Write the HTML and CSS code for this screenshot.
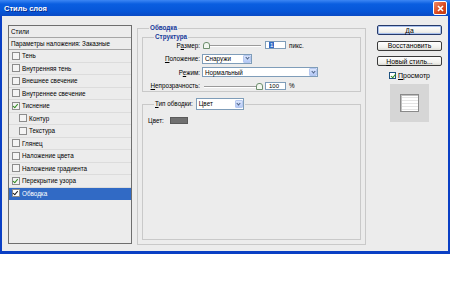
FILE: index.html
```html
<!DOCTYPE html>
<html>
<head>
    <meta charset="utf-8">
    <link rel="stylesheet" href="styles.css">
</head>
<body>
<div class="window">
    <div class="titlebar">
        <span class="title">Стиль слоя</span>
        <span class="close">
            <svg width="7" height="7" viewBox="0 0 7 7"><path d="M1 1 L6 6 M6 1 L1 6" stroke="#fff" stroke-width="1.6"/></svg>
        </span>
    </div>

    <div class="body">
        <!-- список стилей слева -->
        <div class="styles-list">
            <div class="list-head">Стили</div>
            <div class="list-head">Параметры наложения: Заказные</div>
            <div class="item"><span class="cb"></span>Тень</div>
            <div class="item"><span class="cb"></span>Внутренняя тень</div>
            <div class="item"><span class="cb"></span>Внешнее свечение</div>
            <div class="item"><span class="cb"></span>Внутреннее свечение</div>
            <div class="item"><span class="cb checked"></span>Тиснение</div>
            <div class="item sub"><span class="cb"></span>Контур</div>
            <div class="item sub"><span class="cb"></span>Текстура</div>
            <div class="item"><span class="cb"></span>Глянец</div>
            <div class="item"><span class="cb"></span>Наложение цвета</div>
            <div class="item"><span class="cb"></span>Наложение градиента</div>
            <div class="item"><span class="cb checked"></span>Перекрытие узора</div>
            <div class="item selected"><span class="cb checked"></span>Обводка</div>
        </div>

        <!-- параметры обводки -->
        <fieldset class="group main">
            <legend>Обводка</legend>

            <fieldset class="group struct">
                <legend>Структура</legend>
                <div class="row first">
                    <span class="lbl">Р<u>а</u>змер:</span>
                    <span class="slider"><span class="thumb" style="left: 0px"></span></span>
                    <span class="field"><span class="sel-text">1</span></span>
                    <span class="unit">пикс.</span>
                </div>
                <div class="row">
                    <span class="lbl"><u>П</u>оложение:</span>
                    <span class="combo w-pos">Снаружи<span class="arrow"></span></span>
                </div>
                <div class="row">
                    <span class="lbl">Р<u>е</u>жим:</span>
                    <span class="combo w-mode">Нормальный<span class="arrow"></span></span>
                </div>
                <div class="row">
                    <span class="lbl"><u>Н</u>епрозрачность:</span>
                    <span class="slider"><span class="thumb" style="left: 53px"></span></span>
                    <span class="field">100</span>
                    <span class="unit">%</span>
                </div>
            </fieldset>

            <fieldset class="group type">
                <legend>
                    <span class="type-lbl"><u>Т</u>ип обводки:</span>
                    <span class="combo w-type">Цвет<span class="arrow"></span></span>
                </legend>
                <div class="color-row">
                    <span>Цвет:</span>
                    <span class="swatch"></span>
                </div>
            </fieldset>
        </fieldset>

        <!-- кнопки справа -->
        <div class="actions">
            <div class="btn default">Да</div>
            <div class="btn">Восстановить</div>
            <div class="btn"><u>Н</u>овый стиль...</div>
            <div class="preview-check"><span class="cb checked big"></span><span><u>П</u>росмотр</span></div>
            <div class="preview">
                <div class="preview-square"></div>
            </div>
        </div>
    </div>
</div>
</body>
</html>
```

FILE: styles.css
```css
body {
    margin: 0;
    padding: 0;
    background: #ffffff;
    font-family: "Liberation Sans", Arial, sans-serif;
}

u {
    text-decoration: underline;
}

.window {
    width: 450px;
    height: 254px;
    box-sizing: border-box;
    border-left: 2px solid #0a3fc4;
    border-right: 2px solid #0a3fc4;
    border-bottom: 3px solid #0a3fc4;
    background: #ececec;
}

/* синяя полоса заголовка */
.titlebar {
    height: 16px;
    margin: 0 -2px;
    padding: 0 3px 0 4px;
    display: flex;
    align-items: center;
    justify-content: space-between;
    background: linear-gradient(#3c86f4, #0a5ee0 25%, #0656d8 70%, #0a4ac4);
}

.title {
    color: #ffffff;
    font-size: 7.5px;
    font-weight: bold;
    text-shadow: 1px 1px 0 #0a2a8a;
}

.close {
    width: 12px;
    height: 12px;
    border: 1px solid #ffffff;
    border-radius: 2px;
    background: linear-gradient(135deg, #f08a66, #d8451c 60%, #c23a12);
    display: flex;
    align-items: center;
    justify-content: center;
}

.body {
    height: 235px;
    box-sizing: border-box;
    padding: 9px 6px 0 6px;
    display: flex;
    align-items: flex-start;
    font-size: 6.3px;
    color: #000000;
}

/* левый список */
.styles-list {
    width: 124px;
    height: 219px;
    box-sizing: border-box;
    border: 1px solid #6e6e6e;
    background: #ececec;
    flex-shrink: 0;
}

.list-head {
    height: 12px;
    box-sizing: border-box;
    border-bottom: 1px solid #a6a6a6;
    padding-left: 2px;
    display: flex;
    align-items: center;
}

.item {
    height: 12.5px;
    box-sizing: border-box;
    border-bottom: 1px solid #dcdcdc;
    padding-left: 3px;
    display: flex;
    align-items: center;
}

.item.sub {
    padding-left: 10px;
}

.item.selected {
    background: #316ac5;
    color: #ffffff;
    border-bottom-color: #316ac5;
}

.cb {
    width: 6px;
    height: 6px;
    border: 1px solid #8c8c8c;
    background: #f4f4f4;
    margin-right: 2px;
    flex-shrink: 0;
    position: relative;
}

.cb.checked::after {
    content: "";
    position: absolute;
    left: 1px;
    top: 0px;
    width: 2px;
    height: 3.5px;
    border-right: 1.3px solid #2f8a1e;
    border-bottom: 1.3px solid #2f8a1e;
    transform: rotate(40deg);
}

.item.selected .cb {
    background: #ffffff;
}

.item.selected .cb.checked::after {
    border-color: #1a1a1a;
}

/* рамки групп */
.group {
    margin: 0;
    padding: 0 4px;
    border: 1px solid #c9c9c9;
    min-width: 0;
}

.group legend {
    padding: 0 1px;
    margin-left: 7px;
    line-height: 8px;
    font-weight: bold;
    color: #15399a;
}

.main {
    width: 229px;
    height: 221px;
    box-sizing: border-box;
    margin: -1px 0 0 5px;
    flex-shrink: 0;
}

.struct {
    margin-top: 1px;
    padding-bottom: 0.5px;
}

.row {
    height: 10px;
    margin-top: 3.5px;
    display: flex;
    align-items: center;
}

.row.first {
    margin-top: -1px;
}

.lbl {
    width: 53px;
    text-align: right;
    flex-shrink: 0;
}

.slider {
    width: 58px;
    height: 10px;
    margin-left: 3px;
    position: relative;
}

.slider::before {
    content: "";
    position: absolute;
    left: 1px;
    right: 0;
    top: 5px;
    border-top: 1px solid #9a9a9a;
    border-bottom: 1px solid #ffffff;
}

.thumb {
    position: absolute;
    top: 2px;
    width: 5px;
    height: 5px;
    border: 1px solid #6f8f6f;
    border-radius: 3px 3px 0 0;
    background: #f2f7f0;
}

.field {
    width: 21px;
    height: 8px;
    box-sizing: border-box;
    border: 1px solid #7f9db9;
    background: #ffffff;
    margin-left: 4px;
    padding-left: 3px;
    display: flex;
    align-items: center;
    font-size: 6px;
}

.sel-text {
    background: #316ac5;
    color: #ffffff;
    padding: 0 1px;
    line-height: 6px;
}

.unit {
    margin-left: 3px;
}

.combo {
    height: 10px;
    box-sizing: border-box;
    border: 1px solid #7f9db9;
    background: #ffffff;
    margin-left: 2px;
    padding-left: 2px;
    display: flex;
    align-items: center;
    justify-content: space-between;
    font-weight: normal;
    color: #000000;
}

.w-pos {
    width: 50px;
}

.w-mode {
    width: 116px;
}

.w-type {
    width: 48px;
    height: 12px;
    margin-left: 3px;
}

.arrow {
    width: 8px;
    height: 8px;
    box-sizing: border-box;
    border: 1px solid #b6c8f0;
    border-radius: 1px;
    background: linear-gradient(#dbe6fd, #b4c9f6);
    position: relative;
}

.arrow::after {
    content: "";
    position: absolute;
    left: 1.5px;
    top: 0.5px;
    width: 2px;
    height: 2px;
    border-right: 1.2px solid #4d6185;
    border-bottom: 1.2px solid #4d6185;
    transform: rotate(45deg);
}

.type {
    margin-top: 6px;
    height: 142px;
    box-sizing: border-box;
}

.type legend {
    display: flex;
    align-items: center;
    line-height: 12px;
    font-weight: normal;
    color: #000000;
}

.color-row {
    margin-top: 6px;
    margin-left: 1px;
    height: 8px;
    display: flex;
    align-items: center;
}

.swatch {
    width: 18px;
    height: 7px;
    margin-left: 6px;
    background: #707070;
    border: 1px solid #5a5a5a;
    box-sizing: border-box;
}

/* правая колонка */
.actions {
    width: 65px;
    margin-left: 11px;
    display: flex;
    flex-direction: column;
    align-items: center;
    flex-shrink: 0;
}

.btn {
    width: 65px;
    height: 10px;
    box-sizing: border-box;
    border: 1px solid #3a3a3a;
    border-radius: 2px;
    background: linear-gradient(#ffffff, #f0f0ec 70%, #dcdcd6);
    margin-bottom: 5.5px;
    display: flex;
    align-items: center;
    justify-content: center;
    font-size: 6.8px;
}

.btn.default {
    border-color: #263a6a;
    box-shadow: inset 0 0 0 1px #a8c0ec;
}

.preview-check {
    display: flex;
    align-items: center;
    font-size: 7px;
    height: 8px;
}

.cb.big {
    width: 7px;
    height: 7px;
    box-sizing: border-box;
    border-color: #1c5180;
    background: #ffffff;
}

.cb.big.checked::after {
    left: 1.5px;
    top: 0px;
}

.preview {
    width: 39px;
    height: 38px;
    margin-top: 4px;
    background: #d6d6d6;
    display: flex;
    align-items: center;
    justify-content: center;
}

.preview-square {
    width: 19px;
    height: 18px;
    box-sizing: border-box;
    border: 1px solid #8a8a8a;
    box-shadow: inset 1px 1px 0 #c0c0c0;
    background: repeating-linear-gradient(#ffffff 0, #ffffff 2px, #e4e4e4 2px, #e4e4e4 3px);
}
```
